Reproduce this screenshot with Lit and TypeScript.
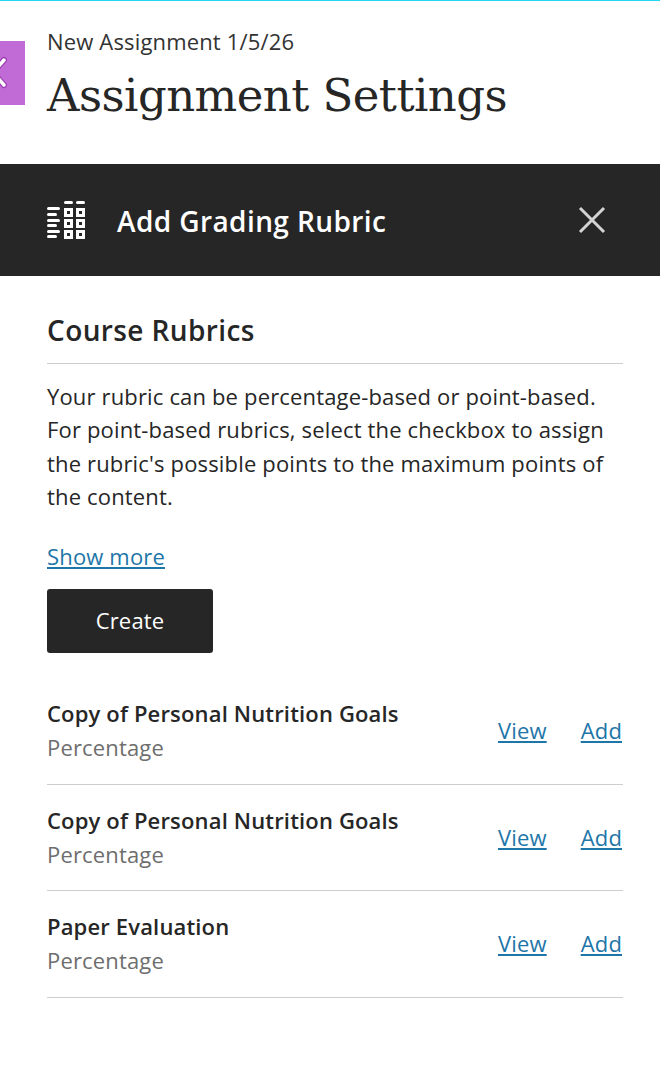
import { LitElement, html, css } from "lit";
import { customElement } from "lit/decorators.js";

const ROWS = [
  "Copy of Personal Nutrition Goals",
  "Copy of Personal Nutrition Goals",
  "Paper Evaluation",
];

@customElement("app-root")
export class AppRoot extends LitElement {
  static styles = css`
    :host {
      display: block;
      position: relative;
      width: 660px;
      height: 1090px;
      overflow: hidden;
      background: #fff;
      color: #262626;
      font-family: "Open Sans", "Noto Sans", sans-serif;
      letter-spacing: 0.16px;
    }
    .top-line {
      height: 1px;
      background: #22d8f0;
    }
    .tab {
      position: absolute;
      left: 0;
      top: 41px;
      width: 25px;
      height: 64px;
      background: #c16bd6;
      overflow: hidden;
    }
    .tab svg {
      display: block;
    }
    .page-head {
      padding: 25px 47px 0;
      height: 163px;
      box-sizing: border-box;
    }
    .crumb {
      font-size: 22px;
      line-height: 30px;
      color: #333;
    }
    h1 {
      margin: 10px 0 0;
      font-family: "DejaVu Serif", serif;
      font-weight: 400;
      font-size: 45px;
      letter-spacing: -0.55px;
      line-height: 60px;
      color: #262626;
      white-space: nowrap;
    }
    .bar {
      height: 112px;
      background: #262626;
      color: #fff;
      display: flex;
      align-items: center;
      padding: 0 47px;
      gap: 30px;
    }
    .bar-title {
      flex: 1;
      font-size: 28px;
      font-weight: 600;
      letter-spacing: 0.4px;
      padding-top: 2px;
    }
    .close {
      display: block;
      margin-right: 7px;
    }
    .body {
      padding: 0 37px 0 47px;
    }
    h2 {
      margin: 0;
      padding: 34px 0 13px;
      font-size: 28px;
      line-height: 40px;
      font-weight: 600;
      letter-spacing: 0.4px;
      color: #262626;
      border-bottom: 1px solid #cdcdcd;
    }
    .desc {
      margin: 16px 0 0;
      font-size: 22px;
      line-height: 33.3px;
      color: #262626;
    }
    a {
      color: #1e76a8;
      text-decoration: underline;
      font-size: 22px;
    }
    .more {
      display: block;
      margin-top: 27px;
      line-height: 33px;
    }
    .create {
      display: block;
      margin-top: 16px;
      width: 166px;
      height: 64px;
      border: 0;
      border-radius: 3px;
      background: #262626;
      color: #fff;
      font: inherit;
      font-size: 22px;
      letter-spacing: inherit;
      padding: 0 0 2px;
    }
    .list {
      margin-top: 25px;
    }
    .row {
      display: flex;
      align-items: center;
      height: 106.5px;
      border-bottom: 1px solid #cdcdcd;
      box-sizing: border-box;
      padding-bottom: 1px;
    }
    .info {
      flex: 1;
      min-width: 0;
    }
    .name {
      font-size: 22px;
      font-weight: 600;
      line-height: 34px;
    }
    .kind {
      font-size: 22px;
      line-height: 34px;
      color: #6e6e6e;
    }
    .actions {
      display: flex;
      gap: 34px;
      margin-right: 1px;
    }
  `;

  render() {
    return html`
      <div class="top-line"></div>
      <div class="tab">
        <svg width="25" height="64" viewBox="0 41 25 64" fill="none" stroke-linecap="round">
          <path d="M-7 72.5L4 60M-7 72.5L4 85" stroke="#9a3cb2" stroke-width="6"></path>
          <path d="M-7 72.5L4 60M-7 72.5L4 85" stroke="#fff" stroke-width="3.5"></path>
        </svg>
      </div>
      <header class="page-head">
        <div class="crumb">New Assignment 1/5/26</div>
        <h1>Assignment Settings</h1>
      </header>
      <div class="bar">
        <svg width="40" height="40" viewBox="0 0 40 40" fill="#fff">
          <rect x="0" y="7" width="13" height="3" rx="1.5"></rect>
          <rect x="0" y="13" width="10" height="3" rx="1.5"></rect>
          <rect x="0" y="19" width="13" height="3" rx="1.5"></rect>
          <rect x="0" y="24" width="10" height="3" rx="1.5"></rect>
          <rect x="0" y="30" width="13" height="3" rx="1.5"></rect>
          <rect x="0" y="35" width="10" height="3" rx="1.5"></rect>
          <rect x="17" y="1" width="9" height="3" rx="1.5"></rect>
          <rect x="29" y="1" width="9" height="3" rx="1.5"></rect>
          <path fill-rule="evenodd" d="M17 8h9v9h-9zM20 11v3h3v-3zM29 8h9v9h-9zM32 11v3h3v-3zM17 19h9v9h-9zM20 22v3h3v-3zM29 19h9v9h-9zM32 22v3h3v-3zM17 30h9v9h-9zM20 33v3h3v-3zM29 30h9v9h-9zM32 33v3h3v-3z"></path>
        </svg>
        <div class="bar-title">Add Grading Rubric</div>
        <svg class="close" width="28" height="28" viewBox="0 0 28 28" stroke="#d4d4d4" stroke-width="3" fill="none">
          <path d="M2 2L26 26M26 2L2 26"></path>
        </svg>
      </div>
      <div class="body">
        <h2>Course Rubrics</h2>
        <p class="desc">Your rubric can be percentage-based or point-based. For point-based rubrics, select the checkbox to assign the rubric's possible points to the maximum points of the content.</p>
        <a class="more" href="#">Show more</a>
        <button class="create">Create</button>
        <div class="list">
          ${ROWS.map(
            (n) => html`
              <div class="row">
                <div class="info">
                  <div class="name">${n}</div>
                  <div class="kind">Percentage</div>
                </div>
                <div class="actions"><a href="#">View</a><a href="#">Add</a></div>
              </div>
            `
          )}
        </div>
      </div>
    `;
  }
}
